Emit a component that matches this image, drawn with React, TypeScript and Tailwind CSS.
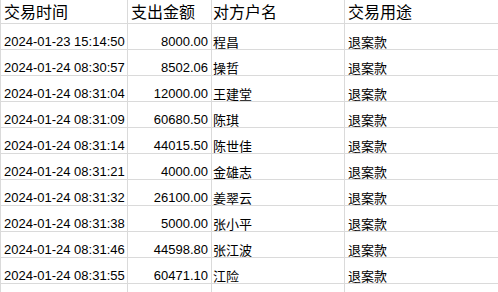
import React from "react";

const rows: [string, string, string, string][] = [
  ["2024-01-23 15:14:50", "8000.00", "程昌", "退案款"],
  ["2024-01-24 08:30:57", "8502.06", "操哲", "退案款"],
  ["2024-01-24 08:31:04", "12000.00", "王建堂", "退案款"],
  ["2024-01-24 08:31:09", "60680.50", "陈琪", "退案款"],
  ["2024-01-24 08:31:14", "44015.50", "陈世佳", "退案款"],
  ["2024-01-24 08:31:21", "4000.00", "金雄志", "退案款"],
  ["2024-01-24 08:31:32", "26100.00", "姜翠云", "退案款"],
  ["2024-01-24 08:31:38", "5000.00", "张小平", "退案款"],
  ["2024-01-24 08:31:46", "44598.80", "张江波", "退案款"],
  ["2024-01-24 08:31:55", "60471.10", "江险", "退案款"],
];

const font = "font-['Liberation_Sans','Noto_Sans_CJK_SC',sans-serif]";
const cjk = "font-['Noto_Sans_CJK_SC',sans-serif]";
const cols = "grid grid-cols-[128px_84px_133px_1fr]";

export default function App() {
  return (
    <div className={`w-[498px] h-[292px] bg-white text-black overflow-hidden ${font}`}>
      <div className={`${cols} h-[24px] border-b border-[#dadada] text-[16px] leading-[23px] ${cjk}`}>
        <div className="border-l border-r border-[#dadada] pl-[3px]">交易时间</div>
        <div className="border-r border-[#dadada] pl-[3px]">支出金额</div>
        <div className="border-r border-[#dadada] pl-[1px]">对方户名</div>
        <div className="pl-[3px]">交易用途</div>
      </div>
      {rows.map((r, i) => (
        <div key={i} className={`${cols} h-[26px] border-b border-[#dadada] text-[13px] leading-[13px]`}>
          <div className="border-l border-r border-[#dadada] pl-[3px] flex items-end pb-[1px] whitespace-nowrap">{r[0]}</div>
          <div className="border-r border-[#dadada] pr-[3px] flex items-end justify-end pb-[1px]">{r[1]}</div>
          <div className={`border-r border-[#dadada] pl-[1px] flex items-end pb-[1px] ${cjk}`}>{r[2]}</div>
          <div className={`pl-[3px] flex items-end pb-[1px] ${cjk}`}>{r[3]}</div>
        </div>
      ))}
      <div className={`${cols} h-[8px]`}>
        <div className="border-l border-r border-[#dadada]" />
        <div className="border-r border-[#dadada]" />
        <div className="border-r border-[#dadada]" />
        <div />
      </div>
    </div>
  );
}
